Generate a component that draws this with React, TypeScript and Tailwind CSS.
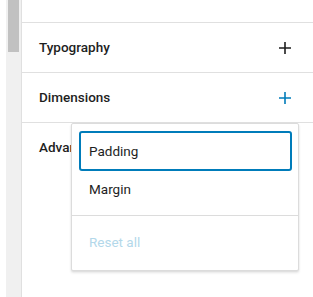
import React from "react";

const PlusIcon = ({ className }: { className: string }) => (
  <svg viewBox="0 0 24 24" width={24} height={24} className={className} fill="currentColor">
    <path d="M18 11.2h-5.2V6h-1.6v5.2H6v1.6h5.2V18h1.6v-5.2H18z" />
  </svg>
);

const sections = [
  { title: "Typography", active: false },
  { title: "Dimensions", active: true },
];

const App = () => {
  return (
    <div
      className="flex h-[297px] w-[313px] overflow-hidden bg-white text-[#1e1e1e]"
      style={{ fontFamily: "Roboto, 'Noto Sans', sans-serif" }}
    >
      <div className="w-[6px] shrink-0 bg-white" />
      <div className="w-[15px] shrink-0 bg-[#f0f0f0] pl-[2px]">
        <div className="h-[52px] w-[11px] bg-[#c1c1c1]" />
      </div>
      <div className="relative flex-1 border-l border-[#e0e0e0]">
        <div className="h-[23px] border-b border-[#e0e0e0]" />
        {sections.map((s) => (
          <div
            key={s.title}
            className="flex h-[50px] items-center justify-between border-b border-[#e0e0e0] pl-[17px] pr-[16px]"
          >
            <span className="text-[13.5px] font-medium">{s.title}</span>
            <PlusIcon className={s.active ? "text-[#007cba]" : "text-[#1e1e1e]"} />
          </div>
        ))}
        <div className="flex h-[49px] items-center pl-[17px]">
          <span className="text-[13.5px] font-medium">Advanced</span>
        </div>

        <div className="absolute left-[49px] top-[123px] w-[228px] rounded-[2px] border border-[#dcdcdc] bg-white shadow-[0_1px_2px_rgba(0,0,0,0.08),0_2px_3px_-0.5px_rgba(0,0,0,0.08)]">
          <div className="pb-[8px] pl-[7px] pr-[6px] pt-[7px]">
            <div className="flex h-[40px] items-center rounded-[3px] border-2 border-[#007cba] px-[8px] text-[13.5px]">
              Padding
            </div>
            <div className="flex h-[36px] items-center border-2 border-transparent px-[8px] text-[13.5px]">
              Margin
            </div>
          </div>
          <div className="border-t border-[#dcdcdc] pb-[10px] pl-[7px] pr-[6px] pt-[8px]">
            <div className="flex h-[36px] items-center border-2 border-transparent px-[8px] text-[13.5px] text-[#b3d8ea]">
              Reset all
            </div>
          </div>
        </div>
      </div>
    </div>
  );
};

export default App;
